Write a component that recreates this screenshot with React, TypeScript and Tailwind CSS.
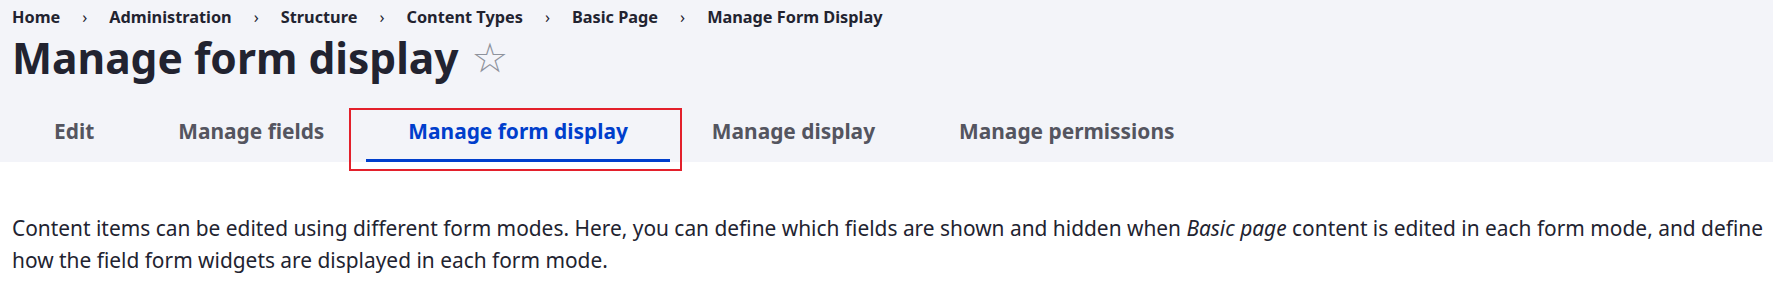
import React from "react";

const crumbs = ["Home", "Administration", "Structure", "Content Types", "Basic Page", "Manage Form Display"];
const tabs = ["Edit", "Manage fields", "Manage form display", "Manage display", "Manage permissions"];

export default function App() {
  return (
    <div className="w-[1773px] h-[284px] bg-white text-[#222330] overflow-hidden" style={{ fontFamily: '"Noto Sans", "Open Sans", sans-serif' }}>
      <div className="bg-[#f3f4f9] px-3 h-[162px] flex flex-col">
        <nav className="mt-[5px] h-[24px] flex items-center text-[16.3px] font-bold leading-[24px]">
          {crumbs.map((c, i) => (
            <React.Fragment key={c}>
              {i > 0 && <span className="px-[22px] font-normal">›</span>}
              <span>{c}</span>
            </React.Fragment>
          ))}
        </nav>
        <div className="flex items-center mt-[1px] h-[56px]">
          <h1 className="text-[42.5px] font-bold leading-[56px]">Manage form display</h1>
          <span className="ml-[13px] text-[41px] leading-none text-[#8e929c] font-normal" style={{ fontFamily: '"DejaVu Sans", sans-serif' }}>☆</span>
        </div>
        <div className="flex mt-[22px]">
          {tabs.map((t, i) => {
            const active = i === 2;
            return (
              <div key={t} className="relative">
                <div className={`px-[42px] pt-[10px] pb-[15px] text-[20.9px] font-bold leading-[26px] border-b-[3px] ${active ? "text-[#003ecc] border-[#003ecc]" : "text-[#545560] border-transparent"}`}>
                  {t}
                </div>
                {active && (
                  <div className="absolute left-[-17px] right-[-12px] top-0 bottom-[-9px] border-[2.5px] border-[#e3202b]" />
                )}
              </div>
            );
          })}
        </div>
      </div>
      <p className="pl-3 mt-[50px] text-[20.9px] leading-[32px] whitespace-nowrap">
        Content items can be edited using different form modes. Here, you can define which fields are shown and hidden when <em>Basic page</em> content is edited in each form mode, and define
        <br />
        how the field form widgets are displayed in each form mode.
      </p>
    </div>
  );
}
